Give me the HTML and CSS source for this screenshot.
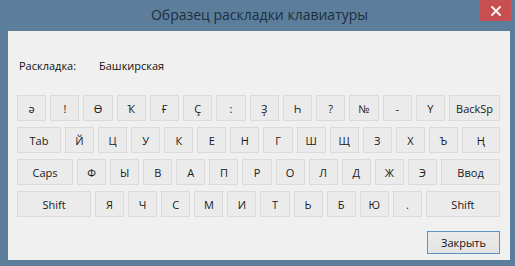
FILE: index.html
```html
<!DOCTYPE html>
<html lang="ru">
<head>
<meta charset="utf-8">
<title>Образец раскладки клавиатуры</title>
<link rel="stylesheet" href="styles.css">
</head>
<body>
<div class="window">
  <div class="titlebar">
    <span class="title">Образец раскладки клавиатуры</span>
    <button class="close-x" aria-label="Закрыть">
      <svg width="10" height="10" viewBox="0 0 10 10"><path d="M1 1 L9 9 M9 1 L1 9" stroke="#fff" stroke-width="1.8" stroke-linecap="square"/></svg>
    </button>
  </div>
  <div class="client">
    <div class="layout-row">
      <span class="label">Раскладка:</span>
      <span class="value">Башкирская</span>
    </div>
    <div class="keyboard">
      <div class="row">
        <span class="key">ә</span><span class="key">!</span><span class="key">Ө</span><span class="key">Ҡ</span><span class="key">Ғ</span><span class="key">Ç</span><span class="key">:</span><span class="key">Ҙ</span><span class="key">Һ</span><span class="key">?</span><span class="key">№</span><span class="key">-</span><span class="key">Ү</span><span class="key w-back">BackSp</span>
      </div>
      <div class="row">
        <span class="key w-tab">Tab</span><span class="key">Й</span><span class="key">Ц</span><span class="key">У</span><span class="key">К</span><span class="key">Е</span><span class="key">Н</span><span class="key">Г</span><span class="key">Ш</span><span class="key">Щ</span><span class="key">З</span><span class="key">Х</span><span class="key">Ъ</span><span class="key w-ng">Ң</span>
      </div>
      <div class="row">
        <span class="key w-caps">Caps</span><span class="key">Ф</span><span class="key">Ы</span><span class="key">В</span><span class="key">А</span><span class="key">П</span><span class="key">Р</span><span class="key">О</span><span class="key">Л</span><span class="key">Д</span><span class="key">Ж</span><span class="key">Э</span><span class="key w-enter">Ввод</span>
      </div>
      <div class="row">
        <span class="key w-shift">Shift</span><span class="key">Я</span><span class="key">Ч</span><span class="key">С</span><span class="key">М</span><span class="key">И</span><span class="key">Т</span><span class="key">Ь</span><span class="key">Б</span><span class="key">Ю</span><span class="key">.</span><span class="key w-shift">Shift</span>
      </div>
    </div>
    <div class="actions">
      <button class="btn-close">Закрыть</button>
    </div>
  </div>
</div>
</body>
</html>
```

FILE: styles.css
```css
html, body {
  margin: 0;
  padding: 0;
  width: 515px;
  height: 266px;
  overflow: hidden;
}

body {
  font-family: "Open Sans", "Noto Sans", "Liberation Sans", sans-serif;
  background: #5c7e9a;
}

.window {
  width: 515px;
  height: 266px;
  box-sizing: border-box;
  background: #5c7e9a;
  padding: 0 5px 6px 8px;
  display: flex;
  flex-direction: column;
}

.titlebar {
  position: relative;
  height: 31px;
  display: flex;
  align-items: center;
  justify-content: center;
  margin-left: -8px;
  margin-right: -5px;
}

.title {
  font-size: 14px;
  color: #1d2f40;
  padding-left: 4px;
  padding-bottom: 2px;
}

.close-x {
  position: absolute;
  top: 0;
  right: 4px;
  width: 31px;
  height: 21px;
  border: none;
  padding: 0;
  background: #c74f52;
  display: flex;
  align-items: center;
  justify-content: center;
}

.client {
  flex: 1;
  background: #f0f0f0;
  padding: 0 10px 0 9px;
  display: flex;
  flex-direction: column;
}

.layout-row {
  display: flex;
  align-items: center;
  height: 14px;
  margin-top: 27px;
  font-size: 11px;
  color: #111;
}

.label {
  margin-left: 2px;
  width: 80px;
}

.keyboard {
  margin-top: 23px;
  display: flex;
  flex-direction: column;
  gap: 6px;
}

.row {
  display: flex;
  gap: 4px;
  height: 26px;
}

.key {
  flex: 1 1 0;
  box-sizing: border-box;
  border: 1px solid #dadada;
  background: #ebebeb;
  display: flex;
  align-items: center;
  justify-content: center;
  font-size: 11px;
  color: #1a1a1a;
}

.w-back { flex: 0 0 51px; }
.w-tab { flex: 0 0 44px; }
.w-ng { flex: 0 0 38px; }
.w-caps { flex: 0 0 56px; }
.w-enter { flex: 0 0 59px; }
.w-shift { flex: 0 0 74px; }

.actions {
  display: flex;
  justify-content: flex-end;
  margin-top: 14px;
}

.btn-close {
  width: 73px;
  height: 23px;
  box-sizing: border-box;
  border: 1px solid #5b93c6;
  background: linear-gradient(#ebebeb, #e3e3e3);
  font-family: "Open Sans", "Noto Sans", "Liberation Sans", sans-serif;
  font-size: 11px;
  color: #111;
  padding: 0;
}
```
